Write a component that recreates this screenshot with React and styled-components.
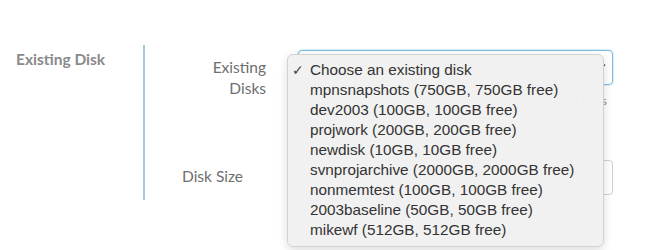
import React from 'react';
import styled, { createGlobalStyle } from 'styled-components';

const GlobalStyle = createGlobalStyle`
  body {
    margin: 0;
    background: #fff;
    font-family: 'Lato', 'Liberation Sans', sans-serif;
  }
`;

const disks = [
  'mpnsnapshots (750GB, 750GB free)',
  'dev2003 (100GB, 100GB free)',
  'projwork (200GB, 200GB free)',
  'newdisk (10GB, 10GB free)',
  'svnprojarchive (2000GB, 2000GB free)',
  'nonmemtest (100GB, 100GB free)',
  '2003baseline (50GB, 50GB free)',
  'mikewf (512GB, 512GB free)',
];

const Page = styled.div`
  display: flex;
  padding-top: 45px;
  width: 650px;
  height: 250px;
  box-sizing: border-box;
`;

const SectionTitle = styled.div`
  width: 127px;
  padding: 5px 0 0 16px;
  font-size: 15.5px;
  font-weight: 700;
  color: #8a8a8a;
  line-height: 18px;
`;

const Fields = styled.div`
  height: 155px;
  border-left: 2px solid #9fcbe6;
  box-sizing: border-box;
  padding: 5px 0 0 37px;
  display: grid;
  grid-template-columns: 84px 315px;
  column-gap: 32px;
  grid-template-rows: 110px 40px;
  align-content: start;
`;

const Label = styled.div`
  text-align: ${(p) => p.$align || 'right'};
  font-size: 15.5px;
  line-height: 21px;
  color: #6e6e6e;
  padding-top: ${(p) => p.$top || 0}px;
`;

const FieldCol = styled.div`
  position: relative;
  display: flex;
  flex-direction: column;
`;

const SelectBox = styled.div`
  height: 35px;
  box-sizing: border-box;
  border: 1px solid #7fb9df;
  border-radius: 4px;
  box-shadow: 0 0 0 1px rgba(127, 185, 223, 0.25);
  display: flex;
  align-items: center;
  justify-content: flex-end;
  padding-right: 6px;
  color: #444;
`;

const Helper = styled.div`
  text-align: right;
  padding-right: 6px;
  font-size: 12px;
  line-height: 16px;
  margin-top: 8px;
  color: #8a8a8a;
`;

const Input = styled.div`
  height: 35px;
  box-sizing: border-box;
  border: 1px solid #cfcfcf;
  border-radius: 4px;
`;

const Menu = styled.ul`
  position: absolute;
  left: -11px;
  top: 4px;
  width: 317px;
  margin: 0;
  padding: 5px 0 6px;
  list-style: none;
  box-sizing: border-box;
  background: rgba(241, 241, 241, 0.98);
  border: 1px solid #d2d2d2;
  border-radius: 6px;
  box-shadow: 0 3px 10px rgba(0, 0, 0, 0.14);
  font-family: 'Liberation Sans', Arial, sans-serif;
  font-size: 15.3px;
  color: #333;
  z-index: 2;
`;

const Item = styled.li`
  display: flex;
  align-items: center;
  height: 20px;
  padding-left: 4px;
`;

const Check = styled.span`
  width: 18px;
  font-family: 'DejaVu Sans', sans-serif;
  font-size: 14px;
  color: #444;
`;

export default function App() {
  return (
    <>
      <GlobalStyle />
      <Page>
        <SectionTitle>Existing Disk</SectionTitle>
        <Fields>
          <Label $top={7}>Existing Disks</Label>
          <FieldCol>
            <SelectBox>
              <svg width="8" height="8" viewBox="0 0 8 8">
                <path d="M1 6.5 L6.5 1" stroke="#444" strokeWidth="1.6" strokeLinecap="round" />
              </svg>
            </SelectBox>
            <Helper>Only unattached disks</Helper>
            <Menu>
              <Item>
                <Check>✓</Check>Choose an existing disk
              </Item>
              {disks.map((d) => (
                <Item key={d}>
                  <Check />
                  {d}
                </Item>
              ))}
            </Menu>
          </FieldCol>
          <Label $align="left" $top={6}>Disk Size</Label>
          <FieldCol>
            <Input />
          </FieldCol>
        </Fields>
      </Page>
    </>
  );
}
